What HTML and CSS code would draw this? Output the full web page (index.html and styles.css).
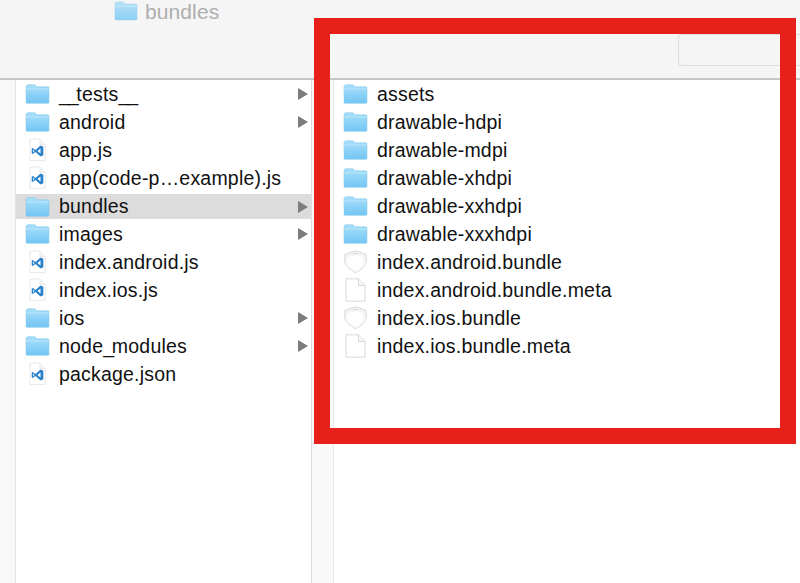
FILE: index.html
```html
<!DOCTYPE html>
<html lang="en">
<head>
<meta charset="utf-8">
<title>bundles</title>
<link rel="stylesheet" href="styles.css">
</head>
<body>
<svg class="defs" width="0" height="0" aria-hidden="true">
  <defs>
    <linearGradient id="fg" x1="0" y1="0" x2="0" y2="1"><stop offset="0" stop-color="#a9dffa"/><stop offset="1" stop-color="#72c6f4"/></linearGradient>
    <linearGradient id="sg" x1="0" y1="0" x2="0" y2="1"><stop offset="0" stop-color="#f2f2f2"/><stop offset="1" stop-color="#fcfcfc"/></linearGradient>
    <symbol id="folder" viewBox="0 0 24 20">
      <path d="M1 3.2C1 1.9 1.8 1 3 1h5.6c.9 0 1.3.3 1.9 1l1 1.1H22c.6 0 1 .4 1 1v13.7c0 .7-.4 1.1-1 1.1H2c-.6 0-1-.4-1-1.1z" fill="url(#fg)" stroke="#7cc3ea" stroke-width=".5"/>
      <path d="M1 5.2h22" stroke="#c4ebfc" stroke-width=".8"/>
    </symbol>
    <symbol id="doc" viewBox="0 0 24 24">
      <path d="M2.500 .8h12.500l6.500 6.700v15.700h-19z" fill="#fff" stroke="#d8d8d8" stroke-width="1"/>
      <path d="M15 .8v6.700h6.500" fill="#f6f6f6" stroke="#d8d8d8" stroke-width="1"/>
    </symbol>
    <symbol id="code" viewBox="0 0 20 24">
      <path d="M2.500 1h10l5 5.500v16h-15z" fill="#fff" stroke="#e6e6e6" stroke-width=".9"/>
      <path d="M12.500 1v5.500h5" fill="#f6f6f6" stroke="#e6e6e6" stroke-width=".9"/>
      <path d="M13 7.500l2.800 1.300v8.400L13 18.500l-5-4.600-2.700 2-1.100-.6V10.700l1.100-.6 2.700 2zM13 10.600l-3 2.400 3 2.400zM5.600 11.600v2.800L7 13z" fill="#2a82cb" fill-rule="evenodd"/>
    </symbol>
    <symbol id="shield" viewBox="0 0 24 24">
      <path d="M12 .8l10.500 3.400c.6 4.500.6 7.700-.6 10.300-1.200 2.600-3.600 4.500-9.900 8.500-6.300-4-8.700-5.900-9.900-8.500C.9 11.900.9 8.700 1.500 4.200z" fill="url(#sg)" stroke="#d2d2d2" stroke-width=".8"/>
      <path d="M12 5l8 2.400c.3 3 .1 5-.9 6.900-1 1.800-2.900 3.300-7.100 6-4.200-2.700-6.100-4.200-7.100-6-1-1.900-1.200-3.900-.9-6.900z" fill="#fff"/>
      <path d="M9.500 3.600h5" stroke="#d6d6d6" stroke-width="1"/>
    </symbol>
  </defs>
</svg>
<div class="window">
  <header class="toolbar">
    <div class="title">
      <svg class="title-icon"><use href="#folder"/></svg>
      <span>bundles</span>
    </div>
    <div class="search"></div>
  </header>
  <main class="browser">
    <div class="strip"></div>
    <ul class="pane pane-first">
      <li class="row"><svg class="ico"><use href="#folder"/></svg><span class="name"><span class="us">__</span>tests<span class="us">__</span></span><i class="arrow"></i></li>
      <li class="row"><svg class="ico"><use href="#folder"/></svg><span class="name">android</span><i class="arrow"></i></li>
      <li class="row"><svg class="ico"><use href="#code"/></svg><span class="name">app.js</span></li>
      <li class="row"><svg class="ico"><use href="#code"/></svg><span class="name">app(code-p…example).js</span></li>
      <li class="row selected"><svg class="ico"><use href="#folder"/></svg><span class="name">bundles</span><i class="arrow"></i></li>
      <li class="row"><svg class="ico"><use href="#folder"/></svg><span class="name">images</span><i class="arrow"></i></li>
      <li class="row"><svg class="ico"><use href="#code"/></svg><span class="name">index.android.js</span></li>
      <li class="row"><svg class="ico"><use href="#code"/></svg><span class="name">index.ios.js</span></li>
      <li class="row"><svg class="ico"><use href="#folder"/></svg><span class="name">ios</span><i class="arrow"></i></li>
      <li class="row"><svg class="ico"><use href="#folder"/></svg><span class="name">node<span class="us">_</span>modules</span><i class="arrow"></i></li>
      <li class="row"><svg class="ico"><use href="#code"/></svg><span class="name">package.json</span></li>
    </ul>
    <div class="gutter"></div>
    <ul class="pane pane-second">
      <li class="row"><svg class="ico"><use href="#folder"/></svg><span class="name">assets</span></li>
      <li class="row"><svg class="ico"><use href="#folder"/></svg><span class="name">drawable-hdpi</span></li>
      <li class="row"><svg class="ico"><use href="#folder"/></svg><span class="name">drawable-mdpi</span></li>
      <li class="row"><svg class="ico"><use href="#folder"/></svg><span class="name">drawable-xhdpi</span></li>
      <li class="row"><svg class="ico"><use href="#folder"/></svg><span class="name">drawable-xxhdpi</span></li>
      <li class="row"><svg class="ico"><use href="#folder"/></svg><span class="name">drawable-xxxhdpi</span></li>
      <li class="row"><svg class="ico"><use href="#shield"/></svg><span class="name">index.android.bundle</span></li>
      <li class="row"><svg class="ico"><use href="#doc"/></svg><span class="name">index.android.bundle.meta</span></li>
      <li class="row"><svg class="ico"><use href="#shield"/></svg><span class="name">index.ios.bundle</span></li>
      <li class="row"><svg class="ico"><use href="#doc"/></svg><span class="name">index.ios.bundle.meta</span></li>
    </ul>
  </main>
  <div class="highlight"></div>
</div>
</body>
</html>
```
FILE: styles.css
```css
* { box-sizing: border-box; }
html, body { margin: 0; height: 100%; }
body { overflow: hidden; background: #fff; font-family: "Liberation Sans", Arial, sans-serif; }
.defs { position: absolute; }
.window { position: relative; width: 800px; height: 583px; display: flex; flex-direction: column; overflow: hidden; }

.toolbar { position: relative; flex: 0 0 80px; background: #f6f5f6; border-bottom: 2px solid #c6c6c6; }
.title { display: flex; align-items: center; gap: 7px; padding-left: 114px; height: 21px; font-size: 21px; letter-spacing: .1px; color: #aeaeae; }
.title span { position: relative; top: 1px; }
.title-icon { width: 24px; height: 20px; opacity: .8; flex: none; }
.search { position: absolute; left: 678px; top: 34px; width: 122px; height: 32px; border: 1px solid #dedede; border-right: 0; border-radius: 4px 0 0 4px; background: #f6f5f6; }

.browser { flex: 1; display: flex; min-height: 0; }
.strip { flex: 0 0 16px; background: #f8f8f8; border-right: 1px solid #e6e6e6; }
.gutter { flex: 0 0 23px; background: #f9f9f9; border-left: 1px solid #dcdcdc; border-right: 1px solid #e8e8e8; }
.pane { margin: 0; padding: 0; list-style: none; background: #fff; }
.pane-first { flex: 0 0 295px; }
.pane-second { flex: 1; }

.row { display: flex; align-items: center; height: 28px; padding-left: 9px; font-size: 19.5px; color: #111; letter-spacing: .2px; }
.row.selected { height: 25px; margin: 2px 0 1px; background: #dcdcdc; }
.ico { flex: none; width: 25px; height: 24px; margin-right: 9px; }
.name { flex: 1; white-space: nowrap; }
.us { letter-spacing: -2.2px; }
.arrow { flex: none; width: 0; height: 0; margin-right: 3px; border-left: 10px solid #7d7d7d; border-top: 6px solid transparent; border-bottom: 6px solid transparent; }

.highlight { position: absolute; left: 314px; top: 18px; width: 482px; height: 426px; border: 16px solid #e8201a; }
```
